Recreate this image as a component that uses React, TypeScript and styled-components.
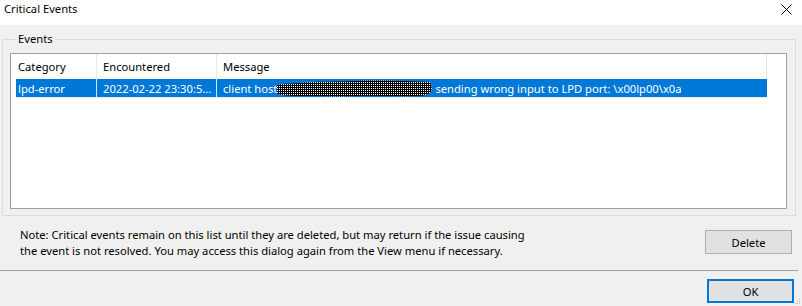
import React from 'react';
import styled, { createGlobalStyle } from 'styled-components';

const GlobalStyle = createGlobalStyle`
  html, body {
    margin: 0;
    padding: 0;
  }
  body {
    font-family: "Noto Sans", "Liberation Sans", sans-serif;
    font-size: 11.2px;
    color: #000;
    background: #f0f0f0;
  }
`;

interface Column {
  key: string;
  title: string;
  width: number;
}

const columns: Column[] = [
  { key: 'category', title: 'Category', width: 86 },
  { key: 'encountered', title: 'Encountered', width: 120 },
  { key: 'message', title: 'Message', width: 550 },
];

const App = () => {
  return (
    <Window>
      <GlobalStyle />
      <TitleBar>
        <Title>Critical Events</Title>
        <CloseButton>
          <svg width="11" height="11" viewBox="0 0 11 11">
            <path d="M0.5 0.5 L10.5 10.5 M10.5 0.5 L0.5 10.5" stroke="#000" strokeWidth="1" fill="none" />
          </svg>
        </CloseButton>
      </TitleBar>
      <Body>
        <GroupBox>
          <Legend>Events</Legend>
          <ListView>
            <HeaderRow>
              {columns.map((col) => (
                <HeaderCell key={col.key} width={col.width} first={col.key === 'category'}>
                  {col.title}
                </HeaderCell>
              ))}
            </HeaderRow>
            <Row selected>
              <Cell width={81} first>
                lpd-error
              </Cell>
              <Cell width={120}>2022-02-22 23:30:5...</Cell>
              <Cell width={550}>
                client host
                <Redaction width="158" height="18" viewBox="0 0 158 18">
                  <defs>
                    <pattern id="dither" width="2" height="2" patternUnits="userSpaceOnUse">
                      <rect width="2" height="2" fill="#000" />
                      <rect width="1" height="1" fill="#fff" />
                    </pattern>
                  </defs>
                  <path
                    d="M0 5 C8 3 14 4 22 3 C40 1 60 2 80 1 C100 0 130 1 153 2 L155 9 C154 13 150 16 140 16 C120 17 100 15 80 16 C60 17 40 16 22 16 C12 16 5 15 0 14 Z"
                    fill="url(#dither)"
                  />
                </Redaction>
                {' sending wrong input to LPD port: \\x00lp00\\x0a'}
              </Cell>
            </Row>
          </ListView>
        </GroupBox>
        <NoteRow>
          <Note>
            Note: Critical events remain on this list until they are deleted, but may return if the issue causing
            <br />
            the event is not resolved. You may access this dialog again from the View menu if necessary.
          </Note>
          <Button>Delete</Button>
        </NoteRow>
        <Separator />
        <ButtonRow>
          <Button primary>OK</Button>
        </ButtonRow>
        <Grip width="6" height="6" viewBox="0 0 6 6">
          <rect x="4" y="0" width="1" height="1" fill="#b4b4b4" />
          <rect x="2" y="2" width="1" height="1" fill="#b4b4b4" />
          <rect x="4" y="2" width="1" height="1" fill="#b4b4b4" />
          <rect x="0" y="4" width="1" height="1" fill="#b4b4b4" />
          <rect x="2" y="4" width="1" height="1" fill="#b4b4b4" />
          <rect x="4" y="4" width="1" height="1" fill="#b4b4b4" />
        </Grip>
      </Body>
    </Window>
  );
};

export default App;

const Window = styled.div`
  width: 802px;
  height: 306px;
  display: flex;
  flex-direction: column;
  background: #f0f0f0;
  overflow: hidden;
`;

const TitleBar = styled.div`
  height: 25px;
  flex-shrink: 0;
  background: #fff;
  display: flex;
  align-items: flex-start;
  justify-content: space-between;
`;

const Title = styled.div`
  padding: 1px 0 0 4px;
  line-height: 16px;
`;

const CloseButton = styled.div`
  padding: 4px 10px 0 0;
  display: flex;
`;

const Body = styled.div`
  position: relative;
  flex: 1;
  display: flex;
  flex-direction: column;
`;

const GroupBox = styled.fieldset`
  margin: 6px 6px 0 2px;
  padding: 6px 8px 6px 7px;
  border: 1px solid #dcdcdc;
  min-width: 0;
`;

const Legend = styled.legend`
  margin-left: 6px;
  padding: 0 2px;
  line-height: 16px;
`;

const ListView = styled.div`
  height: 154px;
  background: #fff;
  border: 1px solid #a0a0a0;
  display: flex;
  flex-direction: column;
`;

const HeaderRow = styled.div`
  display: flex;
  height: 25px;
`;

const HeaderCell = styled.div<{ width: number; first?: boolean }>`
  width: ${(p) => p.width}px;
  box-sizing: border-box;
  padding-left: ${(p) => (p.first ? 7 : 6)}px;
  border-right: 1px solid #e5e5e5;
  line-height: 26px;
  white-space: nowrap;
`;

const Row = styled.div<{ selected?: boolean }>`
  display: flex;
  height: 18px;
  margin-left: 5px;
  align-self: flex-start;
  background: ${(p) => (p.selected ? '#0078d7' : 'transparent')};
  color: ${(p) => (p.selected ? '#fff' : '#000')};
  border-bottom: 1px solid #f0f0f0;
`;

const Cell = styled.div<{ width: number; first?: boolean }>`
  width: ${(p) => p.width}px;
  box-sizing: border-box;
  padding: 1px 6px 0 ${(p) => (p.first ? 2 : 6)}px;
  border-right: 1px solid #d6e6f4;
  line-height: 17px;
  white-space: nowrap;
  overflow: hidden;
  display: flex;
  align-items: center;

  &:last-child {
    border-right: none;
  }
`;

const Redaction = styled.svg`
  flex-shrink: 0;
`;

const NoteRow = styled.div`
  height: 54px;
  display: flex;
  justify-content: space-between;
  align-items: flex-start;
  padding: 10px 10px 0 20px;
  box-sizing: border-box;
`;

const Note = styled.div`
  line-height: 16px;
  padding-top: 1px;
  white-space: nowrap;
`;

const Button = styled.button<{ primary?: boolean }>`
  width: 87px;
  height: 24px;
  margin-top: ${(p) => (p.primary ? 0 : 4)}px;
  background: #e1e1e1;
  border: ${(p) => (p.primary ? '2px solid #0078d7' : '1px solid #adadad')};
  font-family: inherit;
  font-size: 11.2px;
  color: #000;
  padding: 0;
`;

const Separator = styled.div`
  height: 1px;
  margin-right: 4px;
  background: #a0a0a0;
`;

const ButtonRow = styled.div`
  display: flex;
  justify-content: flex-end;
  padding: 8px 8px 0 0;
`;

const Grip = styled.svg`
  position: absolute;
  right: 1px;
  bottom: 1px;
`;
